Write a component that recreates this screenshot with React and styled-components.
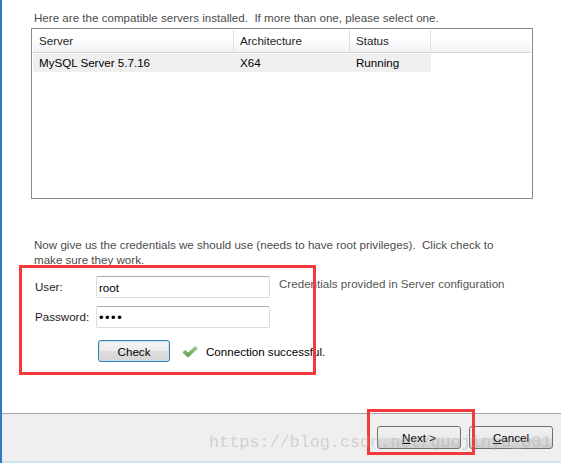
import React from 'react';
import styled, { createGlobalStyle } from 'styled-components';

const GlobalStyle = createGlobalStyle`
  html, body {
    margin: 0;
    padding: 0;
    background: #fff;
  }
  body {
    font-family: 'Liberation Sans', Arial, sans-serif;
    font-size: 11.6px;
  }
`;

const servers = [{ name: 'MySQL Server 5.7.16', arch: 'X64', status: 'Running' }];

const App = () => {
  return (
    <>
      <GlobalStyle />
      <Window>
        <Content>
          <Intro>Here are the compatible servers installed.&nbsp; If more than one, please select one.</Intro>
          <Table>
            <HeaderRow>
              <HeadCell width={201}>Server</HeadCell>
              <HeadCell width={116}>Architecture</HeadCell>
              <HeadCell width={81}>Status</HeadCell>
              <HeadCell last />
            </HeaderRow>
            {servers.map(s => (
              <DataRow key={s.name}>
                <Cell width={201}>{s.name}</Cell>
                <Cell width={116}>{s.arch}</Cell>
                <Cell width={81}>{s.status}</Cell>
              </DataRow>
            ))}
          </Table>

          <Explain>
            Now give us the credentials we should use (needs to have root privileges).&nbsp; Click check to
            <br />
            make sure they work.
          </Explain>

          <Form>
            <Label>User:</Label>
            <Input value="root" readOnly />
            <Hint>Credentials provided in Server configuration</Hint>

            <Label>Password:</Label>
            <Input type="password" value="root" readOnly />
            <span />

            <span />
            <CheckRow>
              <CheckButton>Check</CheckButton>
              <CheckIcon viewBox="0 0 16 12">
                <defs>
                  <linearGradient id="ok" x1="0" y1="0" x2="0" y2="1">
                    <stop offset="0" stopColor="#a6d690" />
                    <stop offset="1" stopColor="#4f9a42" />
                  </linearGradient>
                </defs>
                <path
                  d="M0.8 6.4 L3.2 4.3 L6 7 L13.2 0.6 L15.3 2.6 L6 11.3 Z"
                  fill="url(#ok)"
                  stroke="#6aa35e"
                  strokeWidth="0.6"
                  strokeLinejoin="round"
                />
              </CheckIcon>
              <Success>Connection successful.</Success>
            </CheckRow>
          </Form>
        </Content>

        <Footer>
          <DialogButton>
            <u>N</u>ext &gt;
          </DialogButton>
          <DialogButton>
            <u>C</u>ancel
          </DialogButton>
        </Footer>

        <Marker left={19} top={265} width={297} height={110} />
        <Marker left={367} top={409} width={108} height={46} />
        <Watermark>https://blog.csdn.net/guojinyu_001</Watermark>
      </Window>
    </>
  );
};

const Window = styled.div`
  position: relative;
  width: 561px;
  height: 463px;
  box-sizing: border-box;
  border-left: 2px solid #2b7cc4;
  display: flex;
  flex-direction: column;
  overflow: hidden;
`;

const Content = styled.div`
  flex: 1;
  padding: 10px 28px 0 29px;
`;

const Intro = styled.div`
  color: #4c4c4c;
  padding-left: 3px;
  line-height: 15px;
  margin-bottom: 3px;
`;

const Table = styled.div`
  height: 167px;
  border: 1px solid #878b90;
  background: #fff;
  padding: 1px;
`;

const HeaderRow = styled.div`
  display: flex;
  height: 22px;
  background: linear-gradient(#ffffff 0%, #ffffff 40%, #f1f2f4 100%);
  border-bottom: 1px solid #d5d6d8;
`;

const HeadCell = styled.div`
  ${p => (p.last ? 'flex: 1;' : `width: ${p.width}px;`)}
  box-sizing: border-box;
  padding-left: 6px;
  line-height: 22px;
  color: #1e1e1e;
  border-right: ${p => (p.last ? 'none' : '1px solid #dfe1e4')};
`;

const DataRow = styled.div`
  display: flex;
  width: 398px;
  height: 18px;
  margin-top: 1px;
  background: #efefef;
`;

const Cell = styled.div`
  width: ${p => p.width}px;
  box-sizing: border-box;
  padding-left: 6px;
  line-height: 18px;
  color: #000;
`;

const Explain = styled.div`
  margin-top: 38px;
  padding-left: 3px;
  color: #4c4c4c;
  line-height: 15px;
`;

const Form = styled.div`
  display: grid;
  grid-template-columns: 52px 174px auto;
  column-gap: 9px;
  row-gap: 8px;
  margin-top: 9px;
  padding-left: 4px;
  align-items: start;
`;

const Label = styled.div`
  line-height: 22px;
  color: #1e1e1e;
  white-space: nowrap;
`;

const Input = styled.input`
  box-sizing: border-box;
  width: 174px;
  height: 22px;
  margin: 0;
  border: 1px solid #dadce0;
  border-top-color: #abadb3;
  border-radius: 2px;
  padding: 0 2px;
  font-family: 'Liberation Sans', Arial, sans-serif;
  font-size: ${p => (p.type === 'password' ? '13px' : '11.6px')};
  color: #000;
  outline: none;
  letter-spacing: ${p => (p.type === 'password' ? '1.5px' : '0')};
`;

const Hint = styled.div`
  color: #555;
  line-height: 16px;
`;

const CheckRow = styled.div`
  grid-column: 2 / span 2;
  display: flex;
  align-items: center;
  margin-top: 4px;
  margin-left: 2px;
`;

const CheckButton = styled.button`
  box-sizing: border-box;
  width: 72px;
  height: 22px;
  border: 1px solid #3c7fb1;
  border-radius: 3px;
  background: linear-gradient(#f4f4f4 0%, #ececec 50%, #dcdcdc 51%, #d6d6d6 100%);
  box-shadow: inset 0 0 0 1px #bfe3f7;
  font-family: 'Liberation Sans', Arial, sans-serif;
  font-size: 11.6px;
  color: #000;
  padding: 0;
`;

const CheckIcon = styled.svg`
  width: 16px;
  height: 12px;
  margin-left: 12px;
  margin-top: 2px;
`;

const Success = styled.span`
  margin-left: 8px;
  color: #000;
`;

const Footer = styled.div`
  height: 35px;
  flex-shrink: 0;
  background: #efefef;
  border-top: 1px solid #a5a5a5;
  border-bottom: 2px solid #cfe3f3;
  display: flex;
  justify-content: flex-end;
  align-items: flex-start;
  gap: 8px;
  padding: 12px 8px 0 0;
`;

const DialogButton = styled.button`
  box-sizing: border-box;
  width: 84px;
  height: 23px;
  border: 1px solid #707070;
  border-radius: 3px;
  background: linear-gradient(#f2f2f2 0%, #ebebeb 50%, #dddddd 51%, #cfcfcf 100%);
  font-family: 'Liberation Sans', Arial, sans-serif;
  font-size: 11.6px;
  color: #000;
  padding: 0;
`;

const Marker = styled.div`
  position: absolute;
  left: ${p => p.left - 2}px;
  top: ${p => p.top}px;
  width: ${p => p.width}px;
  height: ${p => p.height}px;
  box-sizing: border-box;
  border: 3px solid #f23a3a;
  pointer-events: none;
`;

const Watermark = styled.div`
  position: absolute;
  left: 207px;
  top: 433px;
  font-family: 'Liberation Mono', 'Courier New', monospace;
  font-size: 16.8px;
  color: rgba(170, 170, 170, 0.45);
  white-space: nowrap;
  pointer-events: none;
`;

export default App;
